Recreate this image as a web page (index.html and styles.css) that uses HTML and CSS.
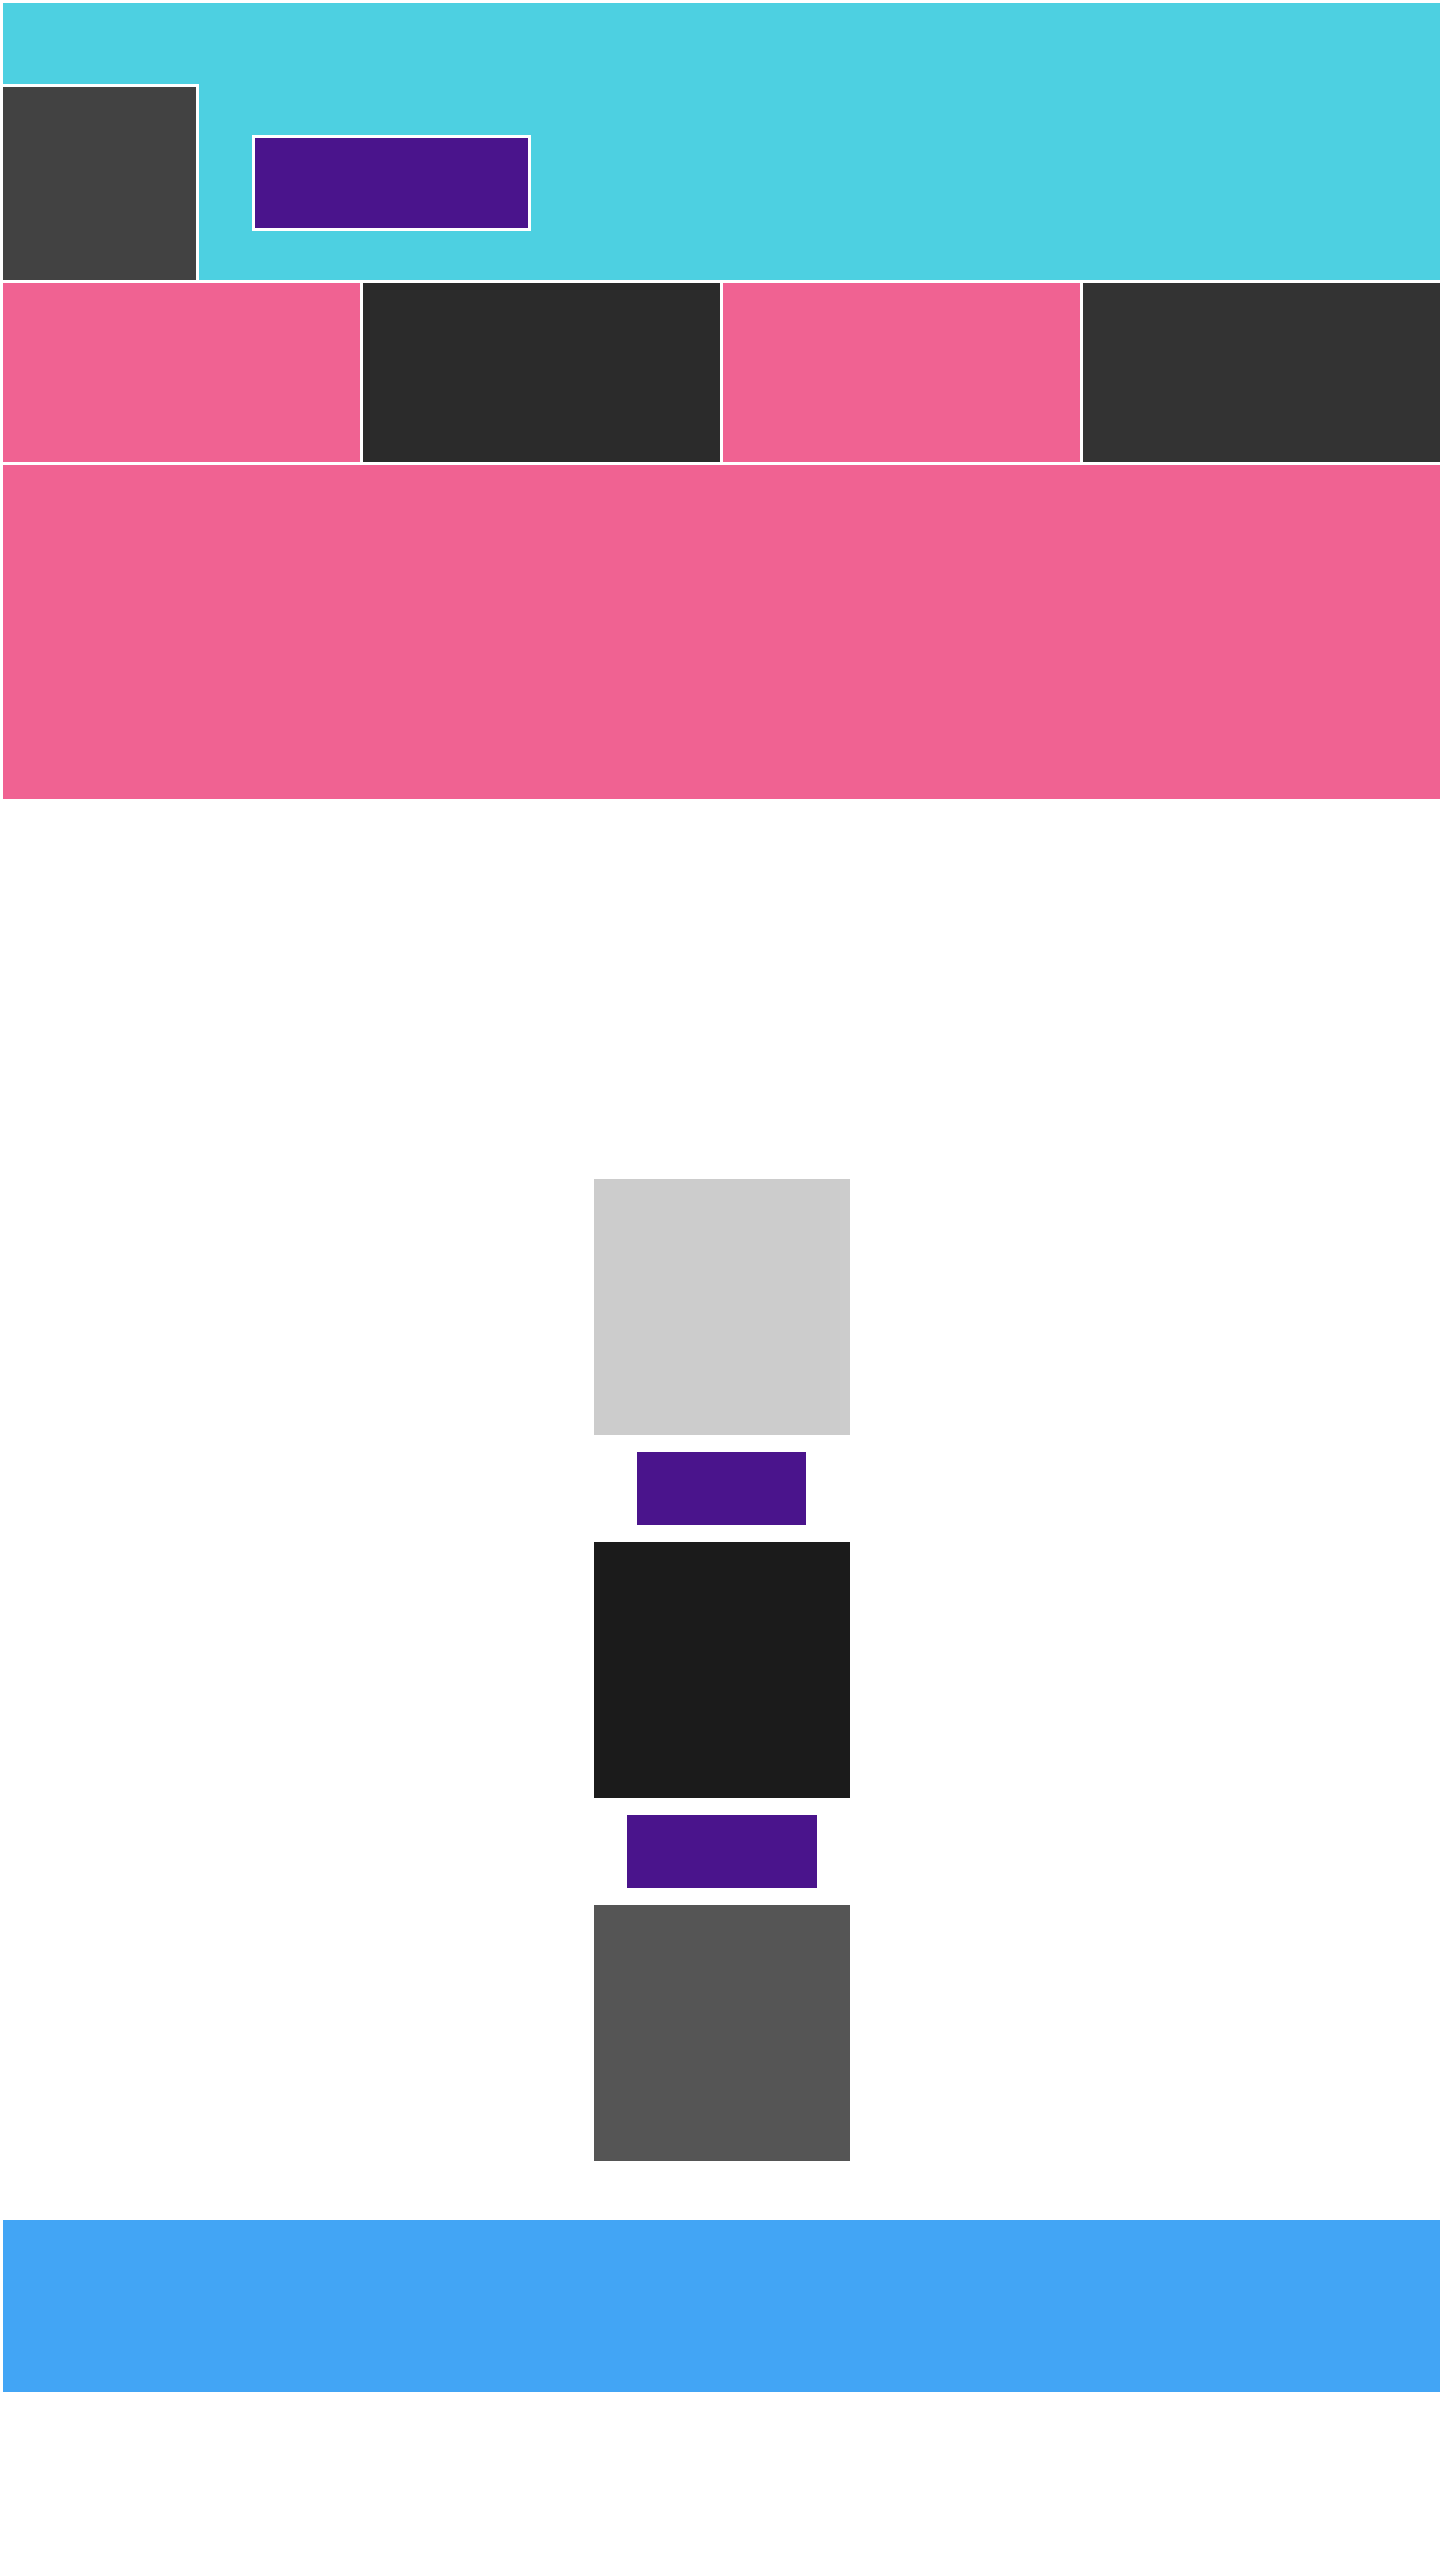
FILE: index.html
```html
<!DOCTYPE html>
<html lang="en">
<head>
<meta charset="utf-8">
<title>Layout</title>
<link rel="stylesheet" href="styles.css">
</head>
<body>
<div class="page">
  <header class="hero">
    <div class="avatar"></div>
    <a class="hero-btn" href="#"></a>
  </header>
  <section class="tiles">
    <div class="tile tile-pink"></div>
    <div class="tile tile-dark"></div>
    <div class="tile tile-pink"></div>
    <div class="tile tile-darker"></div>
  </section>
  <section class="banner"></section>
  <main class="stack">
    <div class="card card-light"></div>
    <a class="btn btn-short" href="#"></a>
    <div class="card card-black"></div>
    <a class="btn btn-long" href="#"></a>
    <div class="card card-gray"></div>
  </main>
  <footer class="footer"></footer>
</div>
</body>
</html>
```

FILE: styles.css
```css
html {
  overflow-x: hidden;
}
body {
  margin: 0;
  background: #ffffff;
  font-family: "Liberation Sans", Arial, sans-serif;
}
.page {
  padding: 3px 0 0 3px;
  display: flex;
  flex-direction: column;
}
.hero {
  background: #4dd0e1;
  height: 193px;
  padding-top: 84px;
  display: flex;
  align-items: center;
}
.avatar {
  width: 193px;
  height: 193px;
  background: #424242;
  outline: 3px solid #ffffff;
  flex: none;
}
.hero-btn {
  display: block;
  width: 273px;
  height: 90px;
  margin-left: 59px;
  margin-top: -1px;
  background: #4a148c;
  outline: 3px solid #ffffff;
}
.tiles {
  margin-top: 3px;
  display: grid;
  grid-template-columns: repeat(4, 1fr);
  gap: 3px;
  height: 179px;
}
.tile-pink {
  background: #f06292;
}
.tile-dark {
  background: #2b2b2b;
}
.tile-darker {
  background: #333333;
}
.banner {
  margin-top: 3px;
  height: 334px;
  background: #f06292;
}
.stack {
  margin-top: 380px;
  display: flex;
  flex-direction: column;
  align-items: center;
  gap: 17px;
}
.card {
  width: 256px;
  height: 256px;
}
.card-light {
  background: #cccccc;
}
.card-black {
  background: #1b1b1b;
}
.card-gray {
  background: #555555;
}
.btn {
  display: block;
  height: 73px;
  background: #4a148c;
}
.btn-short {
  width: 169px;
}
.btn-long {
  width: 190px;
}
.footer {
  margin-top: 59px;
  height: 172px;
  background: #42a5f5;
}
```
